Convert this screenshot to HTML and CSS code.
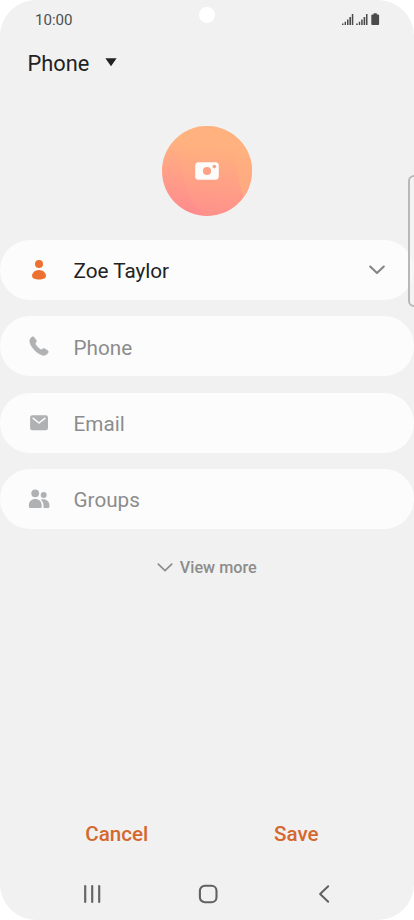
FILE: index.html
```html
<!DOCTYPE html>
<html lang="en">
<head>
<meta charset="utf-8">
<title>New contact</title>
<link rel="stylesheet" href="styles.css">
</head>
<body>
<main class="screen">
  <header class="status">
    <span class="clock">10:00</span>
    <svg class="signals" width="40" height="16" viewBox="0 0 40 16">
      <g fill="#4a4a4a">
        <path d="M2 11.600h1.500V13H2zM4.600 9.800H6V13H4.600zM7 7.400h1.500V13H7zM9.400 5h1.600v8H9.400zM11.800 2h1.500v11h-1.500z"/>
        <path d="M16.200 11.600h1.500V13h-1.500zM18.800 9.800h1.400V13h-1.400zM21.200 7.400h1.500V13h-1.500zM23.600 5h1.600v8h-1.600zM26 2h1.500v11H26z"/>
        <path d="M33.600 1.200h3.200v1.200h1.400q.9 0 .9.900v8.800q0 .9-.9.900h-6q-.9 0-.9-.9V3.300q0-.9.900-.9h1.400z"/>
      </g>
    </svg>
  </header>
  <i class="camera-hole"></i>
  <div class="storage">
    <span class="storage-name">Phone</span>
    <svg width="12" height="11" viewBox="0 0 12 11"><path d="M.4.300h11.200L6 8.300z" fill="#222"/></svg>
  </div>
  <div class="avatar">
    <svg width="90" height="90" viewBox="0 0 90 90">
      <defs>
        <linearGradient id="base" x1=".58" y1="0" x2=".42" y2="1"><stop offset=".2" stop-color="#ffb380"/><stop offset=".95" stop-color="#ff8d8d"/></linearGradient>
        <linearGradient id="glow" x1="0" y1="0" x2="0" y2="1"><stop offset=".25" stop-color="#ffb07e"/><stop offset="1" stop-color="#ff948a"/></linearGradient>
        <clipPath id="disc"><circle cx="45" cy="45" r="45"/></clipPath>
      </defs>
      <g clip-path="url(#disc)">
        <path fill="url(#base)" d="M0 0h90v90H0z"/>
        <path fill="url(#glow)" opacity=".6" d="M20 22C18 54 28 78 44 90H90V0H20z"/>
        <path fill="#ffb07e" opacity=".6" d="M75 20C73 43 76 57 82 72H90V20z"/>
      </g>
      <rect x="33.200" y="36.200" width="23.600" height="17.600" rx="3.500" fill="#fdfcfb"/>
      <circle cx="45" cy="45" r="4.100" fill="#fea184"/><circle cx="52.300" cy="40.600" r="1.800" fill="#fea184"/>
    </svg>
  </div>
  <section class="fields">
    <div class="field filled">
      <svg width="26" height="26" viewBox="0 0 26 26" fill="#ed7031"><circle cx="13" cy="7" r="4"/><path d="M13 12.900c4 0 7 2.800 7 6 0 2.400-3.600 3.500-7 3.500s-7-1.100-7-3.500c0-3.200 3-6 7-6z"/></svg>
      <span>Zoe Taylor</span>
      <svg class="expand" width="18" height="12" viewBox="0 0 18 12"><path d="M2.200 2.600 9 9.100l6.800-6.500" fill="none" stroke="#858585" stroke-width="2.100" stroke-linecap="round" stroke-linejoin="round"/></svg>
    </div>
    <div class="field">
      <svg width="26" height="26" viewBox="0 0 26 26"><path transform="translate(0 .5)" fill="#b0b1b2" d="M6.100 3.600c.8-.5 1.700-.3 2.200.5l1.800 2.700c.5.800.4 1.400-.2 2.100-.8.900-.8 1.500-.1 2.500 1.100 1.700 2.500 3.100 4.200 4.300 1 .7 1.700.6 2.500-.2.700-.7 1.400-.8 2.200-.3l2.800 1.900c.8.500 1 1.400.4 2.200-1.300 2-3 2.900-5.300 2.400-3-.7-6-2.800-8.500-5.600-2.400-2.700-4-5.700-4.300-8.100-.2-1.900.7-3.400 2.300-4.400z" stroke="#b0b1b2" stroke-width=".6"/></svg>
      <span>Phone</span>
    </div>
    <div class="field">
      <svg width="26" height="26" viewBox="0 0 26 26"><rect x="4.100" y="5.200" width="17.900" height="15" rx="2.200" fill="#b0b1b2"/><path d="m7.200 8.300 5.800 4.700 5.800-4.700" fill="none" stroke="#fcfcfc" stroke-width="1.500" stroke-linecap="round" stroke-linejoin="round"/></svg>
      <span>Email</span>
    </div>
    <div class="field">
      <svg width="26" height="26" viewBox="0 0 26 26" fill="#b0b1b2"><circle cx="9.200" cy="7.300" r="3.900"/><circle cx="17.700" cy="9" r="3"/><path d="M2.900 20.800v-1.500c0-3.800 2.700-6.200 6.400-6.200s6.400 2.400 6.400 6.200v1.500q0 1.200-1.200 1.200H4.100q-1.200 0-1.200-1.200z"/><path d="M14.900 13.700c4.500-1.300 8.500 1.400 8.500 5.500v1.600q0 1.200-1.200 1.200h-4.700v-2.500c0-2.400-.9-4.400-2.600-5.800z"/></svg>
      <span>Groups</span>
    </div>
  </section>
  <div class="more">
    <svg width="16" height="10" viewBox="0 0 16 10"><path d="m1.300 1.200 6.700 6.400 6.700-6.400" fill="none" stroke="#8c8c8c" stroke-width="1.700" stroke-linecap="round" stroke-linejoin="round"/></svg>
    <span>View more</span>
  </div>
  <div class="actions"><span class="cancel">Cancel</span><span class="save">Save</span></div>
  <nav class="navbar">
    <svg width="20" height="20" viewBox="0 0 20 20"><path d="M3.200 2v16M10.200 2v16M17.200 2v16" stroke="#666" stroke-width="2.200" stroke-linecap="round"/></svg>
    <svg width="20" height="20" viewBox="0 0 20 20"><rect x="1.900" y="1.700" width="16.600" height="16.600" rx="5" fill="none" stroke="#616161" stroke-width="2.100"/></svg>
    <svg width="20" height="20" viewBox="0 0 20 20"><path d="M14.200 2.300 6.100 10l8.100 7.700" fill="none" stroke="#616161" stroke-width="2" stroke-linecap="round" stroke-linejoin="round"/></svg>
  </nav>
  <i class="edge-handle"></i>
</main>
</body>
</html>
```
FILE: styles.css
```css
* { box-sizing: border-box; }
body { margin: 0; background: #fff; font-family: Roboto, "Liberation Sans", sans-serif; }
svg { display: block; flex: none; }
.screen {
  position: relative;
  display: flex;
  flex-direction: column;
  width: 414px;
  height: 920px;
  overflow: hidden;
  border-radius: 36px;
  background: #f1f1f1;
}
.status {
  display: flex;
  align-items: center;
  justify-content: space-between;
  height: 40px;
  padding: 0 34px 0 35px;
}
.clock { font-size: 15.100px; line-height: 20px; color: #4f4f4f; }
.camera-hole {
  position: absolute;
  left: 199px;
  top: 7px;
  width: 16px;
  height: 16px;
  border-radius: 50%;
  background: #fff;
}
.storage {
  display: flex;
  align-items: center;
  gap: 16px;
  height: 46px;
  padding-left: 27.500px;
  color: #222;
}
.storage-name { font-size: 21.800px; line-height: 30px; padding-top: 2px; }
.avatar { margin: 40px auto 0; }
.fields { display: grid; gap: 16.300px; margin-top: 24px; }
.field {
  display: flex;
  align-items: center;
  height: 60px;
  padding: 0 28px 0 26px;
  border-radius: 30px;
  background: #fcfcfc;
  color: #8c8c8c;
  font-size: 20.700px;
}
.field span { margin-left: 21.500px; line-height: 30px; padding-top: 2px; }
.field:nth-child(2) span { padding-top: 3px; }
.filled { color: #222; }
.expand { margin-left: auto; }
.more {
  display: flex;
  align-items: center;
  justify-content: center;
  gap: 6.500px;
  height: 24px;
  margin-top: 27px;
  color: #8c8c8c;
  font-size: 16.200px;
  font-weight: 500;
}
.actions {
  display: grid;
  grid-template-columns: 180px 179px;
  justify-content: center;
  margin-top: auto;
  padding-right: 1.400px;
  color: #d5682f;
  font-size: 20.600px;
  font-weight: 500;
  line-height: 30px;
  text-align: center;
}
.navbar {
  display: flex;
  justify-content: space-between;
  height: 36px;
  margin-top: 35px;
  padding: 0 80px 0 82px;
}
.edge-handle {
  position: absolute;
  left: 408px;
  top: 175px;
  width: 12px;
  height: 132px;
  border: 2px solid #b8b8b8;
  border-radius: 6px;
  background: rgba(245, 245, 245, .65);
}
```
